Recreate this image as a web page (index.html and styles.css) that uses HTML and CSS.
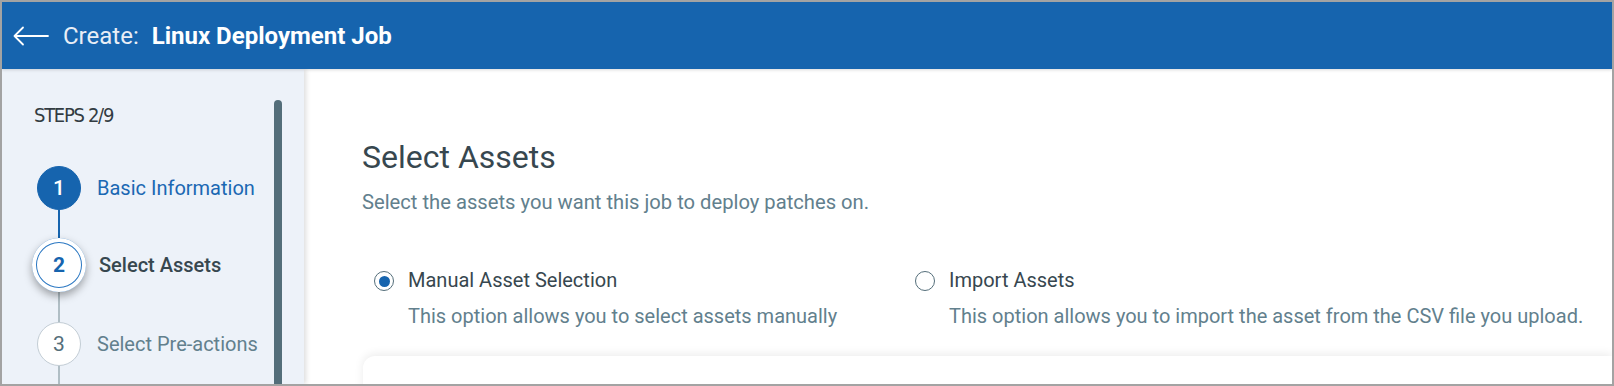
FILE: index.html
```html
<!DOCTYPE html>
<html lang="en">
<head>
    <meta charset="UTF-8">
    <meta name="viewport" content="width=device-width, initial-scale=1.0">
    <title>Create: Linux Deployment Job</title>
    <link rel="stylesheet" href="styles.css">
</head>
<body>

    <div class="frame">
        <header class="header">
            <button class="back" aria-label="Back">
                <svg width="36" height="20" viewBox="0 0 36 20">
                    <path d="M35 10 H1.5 M10 1.5 L1.5 10 L10 18.5" fill="none" stroke="#fff" stroke-width="1.8" stroke-linecap="round" stroke-linejoin="round"/>
                </svg>
            </button>
            <span class="header-prefix">Create:</span>
            <span class="header-title">Linux Deployment Job</span>
        </header>

        <div class="main">
            <aside class="sidebar">
                <div class="steps">
                    <div class="steps-count">STEPS 2/9</div>

                    <div class="step done">
                        <div class="marker">1</div>
                        <div class="step-label">Basic Information</div>
                    </div>
                    <div class="connector done"></div>

                    <div class="step current">
                        <div class="marker">2</div>
                        <div class="step-label">Select Assets</div>
                    </div>
                    <div class="connector"></div>

                    <div class="step">
                        <div class="marker">3</div>
                        <div class="step-label">Select Pre-actions</div>
                    </div>
                    <div class="connector"></div>
                </div>
                <div class="scrollbar"></div>
            </aside>

            <section class="content">
                <h1 class="title">Select Assets</h1>
                <p class="subtitle">Select the assets you want this job to deploy patches on.</p>

                <div class="options">
                    <label class="option">
                        <span class="radio checked"></span>
                        <span class="option-text">
                            <span class="option-name">Manual Asset Selection</span>
                            <span class="option-desc">This option allows you to select assets manually</span>
                        </span>
                    </label>
                    <label class="option">
                        <span class="radio"></span>
                        <span class="option-text">
                            <span class="option-name">Import Assets</span>
                            <span class="option-desc">This option allows you to import the asset from the CSV file you upload.</span>
                        </span>
                    </label>
                </div>

                <div class="card"></div>
            </section>
        </div>
    </div>

</body>
</html>
```

FILE: styles.css
```css
html, body {
    margin: 0;
    padding: 0;
}
body {
    font-family: 'Roboto', 'Liberation Sans', sans-serif;
    background: #fff;
}
.frame {
    width: 1614px;
    height: 386px;
    box-sizing: border-box;
    border: 2px solid #a3a3a3;
    display: flex;
    flex-direction: column;
    overflow: hidden;
}
.header {
    height: 67px;
    flex: none;
    background-color: #1664ae;
    display: flex;
    align-items: center;
    color: #fff;
    font-size: 24px;
    position: relative;
    z-index: 2;
    box-shadow: 0 1px 3px rgba(0, 0, 0, 0.15);
}
.back {
    background: none;
    border: none;
    padding: 0;
    margin: 0 14px 0 11px;
    display: flex;
    cursor: pointer;
}
.header-prefix {
    color: #e8eef6;
    margin-right: 13px;
}
.header-title {
    font-weight: 700;
}
.main {
    flex: 1;
    display: flex;
    min-height: 0;
}
.sidebar {
    width: 302px;
    flex: none;
    background-color: #edf2f9;
    display: flex;
    position: relative;
    z-index: 1;
    box-shadow: 2px 0 5px rgba(0, 0, 0, 0.14);
}
.steps {
    flex: 1;
    padding: 33px 0 0 32px;
}
.steps-count {
    font-family: 'Liberation Sans Narrow', 'DejaVu Sans Condensed', 'Roboto', sans-serif;
    font-size: 20px;
    line-height: 26px;
    color: #333c42;
    letter-spacing: -1.3px;
    margin-bottom: 38px;
}
.step {
    display: flex;
    align-items: center;
    height: 44px;
    padding-left: 3px;
}
.marker {
    width: 44px;
    height: 44px;
    flex: none;
    box-sizing: border-box;
    border-radius: 50%;
    background: #fff;
    border: 1px solid #c3cdd5;
    color: #546e7a;
    font-size: 21px;
    display: flex;
    align-items: center;
    justify-content: center;
}
.step-label {
    margin-left: 16px;
    font-size: 20px;
    color: #62808d;
}
.step.done .marker {
    background: #1664ae;
    border-color: #1664ae;
    color: #fff;
    font-weight: 500;
}
.step.done .step-label {
    color: #1b68b3;
}
.step.current .marker {
    width: 54px;
    height: 54px;
    margin: -5px;
    border: none;
    color: #1664ae;
    font-weight: 700;
    font-size: 21px;
    box-shadow: inset 0 0 0 4px #fff, inset 0 0 0 5px #2a77c2, 0 4px 8px rgba(0, 0, 0, 0.35);
}
.step.current .step-label {
    color: #37474f;
    font-weight: 500;
    margin-left: 18px;
}
.connector {
    width: 2px;
    height: 35px;
    margin-left: 24px;
    background: #b0bec5;
}
.connector.done {
    height: 33px;
    background: #1664ae;
}
.connector:last-child {
    height: 40px;
}
.scrollbar {
    width: 8px;
    margin: 31px 22px 0 0;
    background: #546e7a;
    border-radius: 4px 4px 0 0;
}
.content {
    flex: 1;
    padding: 0 0 0 58px;
    min-width: 0;
}
.title {
    font-size: 32px;
    font-weight: 400;
    color: #37474f;
    margin: 69px 0 0;
    line-height: 38px;
}
.subtitle {
    font-size: 20.2px;
    color: #62808d;
    margin: 14px 0 0;
    line-height: 24px;
}
.options {
    display: grid;
    grid-template-columns: 541px 1fr;
    margin: 54px 0 0 12px;
}
.option {
    display: flex;
    align-items: flex-start;
    cursor: pointer;
}
.radio {
    width: 20px;
    height: 20px;
    box-sizing: border-box;
    border: 1.5px solid #546e7a;
    border-radius: 50%;
    flex: none;
    margin-top: 3px;
    display: flex;
    align-items: center;
    justify-content: center;
}
.radio.checked::after {
    content: "";
    width: 11px;
    height: 11px;
    border-radius: 50%;
    background: #1664ae;
}
.option-text {
    display: flex;
    flex-direction: column;
    margin-left: 14px;
}
.option-name {
    font-size: 20px;
    color: #37474f;
    line-height: 24px;
}
.option-desc {
    font-size: 20px;
    color: #62808d;
    line-height: 24px;
    margin-top: 12px;
}
.card {
    margin: 28px 0 0 1px;
    height: 60px;
    border-radius: 12px 0 0 0;
    background: #fff;
    box-shadow: 0 -2px 10px rgba(0, 0, 0, 0.08);
}
```
